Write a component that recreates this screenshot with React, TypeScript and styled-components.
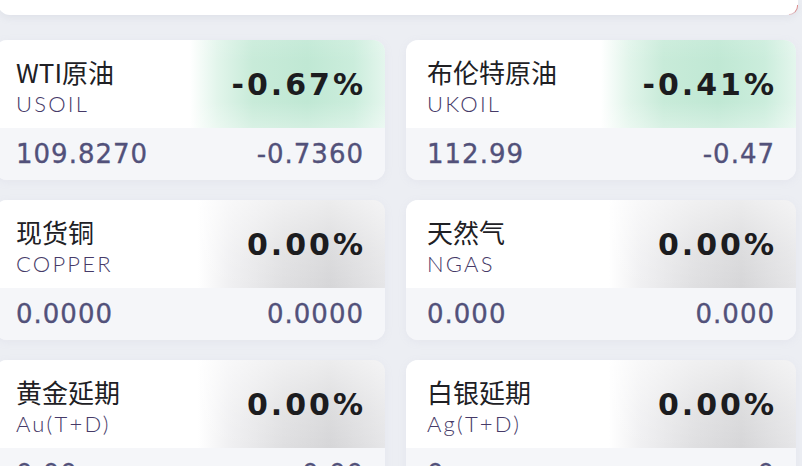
import React from 'react';
import styled, { createGlobalStyle, css } from 'styled-components';

const Global = createGlobalStyle`
  html, body { margin: 0; padding: 0; background: #eceef3; }
  body { width: 802px; height: 466px; overflow: hidden; font-family: "Noto Sans", "Noto Sans CJK SC", sans-serif; }
`;

const Page = styled.div`
  width: 802px;
  height: 466px;
  overflow: hidden;
  background: #eceef3;
`;

const Banner = styled.div`
  position: relative;
  height: 15px;
  margin: 0 4px 0 -2px;
  background: #ffffff;
  border-radius: 0 0 12px 12px;
  box-shadow: 0 3px 7px rgba(150, 155, 178, 0.14);
  &::after {
    content: '';
    position: absolute;
    right: 0;
    bottom: 0;
    width: 8px;
    height: 9px;
    border-right: 1.5px solid rgba(214, 96, 96, 0.7);
    border-bottom: 1px solid rgba(214, 96, 96, 0.35);
    border-bottom-right-radius: 12px;
  }
`;

const Grid = styled.div`
  display: grid;
  grid-template-columns: 390px 390px;
  column-gap: 21px;
  row-gap: 20px;
  margin: 25px 0 0 -5px;
`;

const Card = styled.div`
  height: 140px;
  border-radius: 12px;
  overflow: hidden;
  background: #f5f6f9;
  display: flex;
  flex-direction: column;
  box-shadow: 0 2px 8px rgba(165, 170, 195, 0.1);
`;

type Tone = 'down' | 'flat';

const Top = styled.div<{ $tone: Tone }>`
  height: 88px;
  flex: none;
  display: flex;
  justify-content: space-between;
  align-items: center;
  padding: 0 22px 0 21px;
  ${(p) =>
    p.$tone === 'down'
      ? css`
          background:
            linear-gradient(180deg, rgba(255, 255, 255, 0.1) 0%, rgba(255, 255, 255, 0) 25%, rgba(255, 255, 255, 0) 70%, rgba(255, 255, 255, 0.3) 100%),
            linear-gradient(90deg, #ffffff 50%, #e2f5eb 57%, #c8ebd9 66%, #c0e8d4 80%, #cbeddc 92%, #e4f6ed 100%);
        `
      : css`
          background:
            linear-gradient(180deg, rgba(255, 255, 255, 0.55) 0%, rgba(255, 255, 255, 0.15) 60%, rgba(255, 255, 255, 0) 100%),
            linear-gradient(90deg, #ffffff 52%, #f0f0f2 60%, #dfdfe1 74%, #d6d6d8 86%, #e6e6e8 100%);
        `}
`;

const NameBlock = styled.div`
  display: flex;
  flex-direction: column;
  align-self: flex-start;
  padding-top: 17px;
`;

const Name = styled.div`
  font-family: "Noto Sans CJK SC", "Noto Sans", sans-serif;
  font-size: 26px;
  line-height: 30px;
  color: #202024;
  white-space: nowrap;
`;

const Code = styled.div`
  font-family: "Lato", "Liberation Sans", sans-serif;
  font-weight: 300;
  font-size: 22px;
  line-height: 24px;
  margin-top: 5px;
  letter-spacing: 2.2px;
  color: #463a68;
  white-space: nowrap;
`;

const Percent = styled.div`
  font-family: "DejaVu Sans", sans-serif;
  font-weight: 700;
  font-size: 30px;
  letter-spacing: 3px;
  margin-right: -3px;
  color: #1c1c1f;
  white-space: nowrap;
`;

const Band = styled.div`
  flex: 1;
  display: flex;
  justify-content: space-between;
  align-items: center;
  padding: 0 22px 0 21px;
  background: #f5f6f9;
`;

const Num = styled.div`
  font-family: "DejaVu Sans", sans-serif;
  font-size: 26px;
  letter-spacing: 1px;
  color: #52517a;
  -webkit-text-stroke: 0.35px #52517a;
  white-space: nowrap;
`;

const LastNum = styled(Num)`
  margin-right: -1px;
`;

interface Item {
  name: string;
  code: string;
  pct: string;
  price: string;
  change: string;
  tone: Tone;
}

const items: Item[] = [
  { name: 'WTI原油', code: 'USOIL', pct: '-0.67%', price: '109.8270', change: '-0.7360', tone: 'down' },
  { name: '布伦特原油', code: 'UKOIL', pct: '-0.41%', price: '112.99', change: '-0.47', tone: 'down' },
  { name: '现货铜', code: 'COPPER', pct: '0.00%', price: '0.0000', change: '0.0000', tone: 'flat' },
  { name: '天然气', code: 'NGAS', pct: '0.00%', price: '0.000', change: '0.000', tone: 'flat' },
  { name: '黄金延期', code: 'Au(T+D)', pct: '0.00%', price: '0.00', change: '0.00', tone: 'flat' },
  { name: '白银延期', code: 'Ag(T+D)', pct: '0.00%', price: '0', change: '0', tone: 'flat' },
];

export default function App() {
  return (
    <Page>
      <Global />
      <Banner />
      <Grid>
        {items.map((it) => (
          <Card key={it.code}>
            <Top $tone={it.tone}>
              <NameBlock>
                <Name>{it.name}</Name>
                <Code>{it.code}</Code>
              </NameBlock>
              <Percent>{it.pct}</Percent>
            </Top>
            <Band>
              <Num>{it.price}</Num>
              <LastNum>{it.change}</LastNum>
            </Band>
          </Card>
        ))}
      </Grid>
    </Page>
  );
}
